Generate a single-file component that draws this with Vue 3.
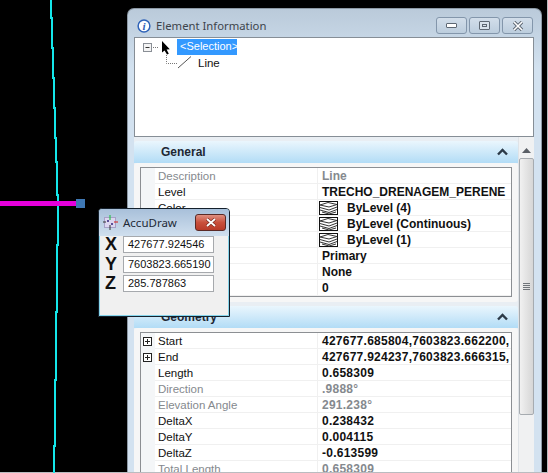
<script setup>
const generalRows = [
  { id: 'desc', label: 'Description', value: 'Line', muted: true },
  { id: 'level', label: 'Level', value: 'TRECHO_DRENAGEM_PERENE' },
  { id: 'color', label: 'Color', value: 'ByLevel (4)', stack: true },
  { id: 'style', label: '', value: 'ByLevel (Continuous)', stack: true },
  { id: 'weight', label: '', value: 'ByLevel (1)', stack: true },
  { id: 'class', label: '', value: 'Primary' },
  { id: 'template', label: '', value: 'None' },
  { id: 'priority', label: '', value: '0' },
]

const geometryRows = [
  { id: 'start', label: 'Start', value: '427677.685804,7603823.662200,', expand: true },
  { id: 'end', label: 'End', value: '427677.924237,7603823.666315,', expand: true },
  { id: 'length', label: 'Length', value: '0.658309' },
  { id: 'dir', label: 'Direction', value: '.9888°', muted: true },
  { id: 'elev', label: 'Elevation Angle', value: '291.238°', muted: true },
  { id: 'dx', label: 'DeltaX', value: '0.238432' },
  { id: 'dy', label: 'DeltaY', value: '0.004115' },
  { id: 'dz', label: 'DeltaZ', value: '-0.613599' },
  { id: 'total', label: 'Total Length', value: '0.658309', muted: true },
]

const panels = [
  { title: 'General', rows: generalRows },
  { title: 'Geometry', rows: geometryRows, numeric: true },
]

const coords = [
  ['X', '427677.924546'],
  ['Y', '7603823.665190'],
  ['Z', '285.787863'],
]

const cyanPath = 'M51 0V18H52V48H53V78H54V108H55V138H56V162H57V195H58V245H57V312H56V380H55V446H54V473'
</script>

<template>
  <div class="desktop">
    <svg class="cad" width="548" height="473">
      <path :d="cyanPath" fill="none" stroke="#14e6ea" stroke-width="2" />
      <rect x="0" y="201" width="76" height="5" fill="#e600dc" />
      <rect x="76" y="199" width="9" height="9" fill="#3f78b4" />
    </svg>

    <section class="window">
      <header class="titlebar">
        <svg class="info" width="14" height="14" viewBox="0 0 15 15">
          <circle cx="7.5" cy="7.5" r="6.3" fill="#fff" stroke="#2f63b8" stroke-width="1.6" />
          <text x="7.5" y="11.6" text-anchor="middle" class="info-i">i</text>
        </svg>
        <span class="title">Element Information</span>
        <div class="caption">
          <button class="cap"><span class="min"></span></button>
          <button class="cap"><span class="max"></span></button>
          <button class="cap">
            <svg width="12" height="10" viewBox="0 0 12 10">
              <path d="M2 1L10 9M10 1L2 9" stroke="#5b6570" stroke-width="3.4" />
              <path d="M2 1L10 9M10 1L2 9" stroke="#fff" stroke-width="1.6" />
            </svg>
          </button>
        </div>
      </header>

      <div class="tree">
        <svg class="tree-art" width="60" height="40" viewBox="0 0 60 40">
          <rect x="9.5" y="5.5" width="8" height="8" fill="#f4f4f4" stroke="#8a8f96" />
          <path d="M11.5 9.5H15.5" stroke="#333" />
          <path d="M19 9.5H25M32.5 17V25.5H43" stroke="#777" stroke-dasharray="1 1" fill="none" />
          <path d="M28 3V14.5L30.6 12.4L33 16.6L34.8 15.8L32.6 11.6L35.8 11.2Z" fill="#000" />
          <path d="M44 30L57 18.5" stroke="#555" />
        </svg>
        <div class="selection">&lt;Selection&gt;</div>
        <div class="leaf">Line</div>
      </div>

      <div class="content">
        <div class="panels">
          <article v-for="panel in panels" :key="panel.title" class="panel" :class="{ numeric: panel.numeric }">
            <div class="panel-head">
              <h2>{{ panel.title }}</h2>
              <svg width="11" height="8" viewBox="0 0 11 8">
                <path d="M1 6.5L5.5 2L10 6.5" fill="none" stroke="#2c3a48" stroke-width="2.4" />
              </svg>
            </div>
            <div class="panel-body">
              <div class="props">
                <div v-for="row in panel.rows" :key="row.id" class="row" :class="{ muted: row.muted }">
                  <div class="gutter">
                    <svg v-if="row.expand" width="9" height="9" viewBox="0 0 9 9">
                      <rect x="0.5" y="0.5" width="8" height="8" fill="#fff" stroke="#222" />
                      <path d="M2 4.5H7M4.5 2V7" stroke="#222" />
                    </svg>
                  </div>
                  <div class="label">{{ row.label }}</div>
                  <div class="value">
                    <svg v-if="row.stack" class="stack" width="19" height="14" viewBox="0 0 19 14">
                      <rect x="0.5" y="0.5" width="18" height="13" fill="#fff" stroke="#111" />
                      <path d="M1 4L9 1.5L18 3.5L10 6ZM1 6.5L10 9L18 6M1 9L10 11.5L18 8.5M3 11L10 13L17 11" fill="none" stroke="#333" />
                    </svg>
                    <span>{{ row.value }}</span>
                  </div>
                </div>
              </div>
            </div>
          </article>
        </div>

        <div class="scrollbar">
          <svg class="arrow" width="9" height="5" viewBox="0 0 9 5"><path d="M4.5 0L9 5H0Z" fill="#5a5f66" /></svg>
          <div class="thumb">
            <span class="grip"></span>
          </div>
        </div>
      </div>
    </section>

    <section class="accudraw">
      <header class="ad-title">
        <svg width="15" height="15" viewBox="0 0 15 15">
          <rect x="1.5" y="2.5" width="11" height="10" fill="#dcd6f0" stroke="#a7a1c8" />
          <path d="M7 0V5" stroke="#2fbf4f" stroke-width="1.2" />
          <path d="M7 10V15M0 7H3" stroke="#333" />
          <path d="M11 7H15" stroke="#d23b3b" stroke-width="1.2" />
          <rect x="4" y="5" width="2" height="2" fill="#5b4f96" />
          <rect x="8" y="8" width="2" height="2" fill="#5b4f96" />
        </svg>
        <span class="ad-name">AccuDraw</span>
        <button class="ad-close">
          <svg width="12" height="9" viewBox="0 0 12 9">
            <path d="M2 1L10 8M10 1L2 8" stroke="#7a2a20" stroke-width="3.2" />
            <path d="M2 1L10 8M10 1L2 8" stroke="#fff" stroke-width="1.8" />
          </svg>
        </button>
      </header>
      <div class="ad-fields">
        <div v-for="[axis, val] in coords" :key="axis" class="ad-row">
          <span class="axis">{{ axis }}</span>
          <span class="field">{{ val }}</span>
        </div>
      </div>
    </section>
  </div>
</template>

<style scoped>
.desktop {
  position: relative;
  box-sizing: border-box;
  width: 548px;
  height: 473px;
  overflow: hidden;
  background: #000;
  font-family: "Liberation Sans", Arial, sans-serif;
  font-size: 11.5px;
  box-shadow: inset -1px -1px 0 #b9bcc0;
}

.cad {
  position: absolute;
  left: 0;
  top: 0;
}

.window {
  position: absolute;
  left: 127px;
  top: 8px;
  box-sizing: border-box;
  width: 415px;
  height: 464px;
  overflow: hidden;
  padding: 0 7px 0 6px;
  border: 1px solid #8d99a5;
  border-bottom: 0;
  border-radius: 7px 7px 0 0;
  background: linear-gradient(#bacada 0, #c6d6e5 30px, #d3e2f0 60px);
}

.titlebar {
  display: flex;
  align-items: center;
  box-sizing: border-box;
  height: 28px;
  padding-top: 5px;
}

.info {
  margin: 0 5px 0 3px;
}

.info-i {
  font-family: "Liberation Serif", serif;
  font-size: 12px;
  font-style: italic;
  font-weight: 700;
  fill: #2f63b8;
}

.title {
  font-family: "Noto Sans", sans-serif;
  font-size: 11.3px;
  color: #3d444c;
}

.caption {
  display: flex;
  gap: 2px;
  margin-left: auto;
  margin-right: 1px;
}

.cap {
  display: flex;
  align-items: center;
  justify-content: center;
  box-sizing: border-box;
  width: 31px;
  height: 17px;
  padding: 0;
  border: 1px solid #8396ab;
  border-radius: 3px;
  background: linear-gradient(#d2deea, #bccddd);
}

.min {
  display: block;
  width: 9px;
  height: 3px;
  border: 1px solid #5e6873;
  border-radius: 1px;
  background: #fff;
}

.max {
  display: block;
  box-sizing: border-box;
  width: 11px;
  height: 9px;
  padding: 2px;
  border: 1px solid #5e6873;
  border-radius: 1px;
  background: #d9e3ec;
  box-shadow: inset 0 0 0 2px #d9e3ec, inset 0 0 0 3px #5e6873;
}

.tree {
  position: relative;
  box-sizing: border-box;
  height: 100px;
  border: 1px solid #868e96;
  background: #fff;
}

.tree-art {
  position: absolute;
  left: -1px;
  top: 0;
}

.selection {
  position: absolute;
  left: 42px;
  top: 1px;
  box-sizing: border-box;
  width: 60px;
  height: 16px;
  padding-left: 3px;
  background: #3399ff;
  color: #fff;
  font-size: 11px;
  line-height: 15px;
  white-space: nowrap;
}

.leaf {
  position: absolute;
  left: 63px;
  top: 18px;
  line-height: 15px;
  color: #111;
}

.content {
  display: flex;
  background: #e9eef3;
}

.panels {
  flex: none;
  width: 384px;
  padding-top: 4px;
}

.panel {
  margin-bottom: 4px;
}

.panel-head {
  display: flex;
  align-items: center;
  justify-content: space-between;
  box-sizing: border-box;
  height: 22px;
  padding: 0 10px 0 27px;
  border-radius: 3px 3px 0 0;
  background: linear-gradient(#eaf6fd, #b2dcf6);
}

h2 {
  margin: 0;
  font-size: 12px;
  font-weight: 700;
  color: #1d2733;
}

.panel-body {
  padding: 4px 6px 5px;
  border-radius: 3px;
  background: #f6f6f6;
}

.props {
  border: 1px solid #8c8f93;
  background: #fff;
}

.row {
  display: flex;
  height: 16px;
  line-height: 16px;
  box-shadow: inset 0 -1px 0 #f0f0f0;
  color: #111;
}

.gutter {
  display: flex;
  align-items: center;
  flex: none;
  width: 14px;
  padding-left: 2px;
  box-sizing: border-box;
  background: #f4f6f8;
}

.label {
  flex: none;
  width: 163px;
  padding-left: 3px;
  box-sizing: border-box;
  border-right: 1px solid #f0f0f0;
  white-space: nowrap;
  overflow: hidden;
}

.value {
  display: flex;
  align-items: center;
  padding-left: 4px;
  font-size: 12px;
  font-weight: 700;
  white-space: nowrap;
}

.numeric .value {
  letter-spacing: 0.25px;
}

.stack {
  flex: none;
  margin: 0 9px 0 -3px;
}

.muted {
  color: #85898e;
}

.scrollbar {
  position: relative;
  flex: none;
  width: 16px;
  height: 340px;
  box-sizing: border-box;
  border-left: 1px solid #dfe3e7;
  background: #f0f1f2;
}

.arrow {
  position: absolute;
  left: 3px;
  top: 11px;
}

.thumb {
  position: absolute;
  left: 0;
  top: 21px;
  box-sizing: border-box;
  width: 15px;
  height: 257px;
  border: 1px solid #a6abb0;
  border-radius: 2px;
  background: linear-gradient(90deg, #f1f1f1, #d6d6d6);
}

.grip {
  position: absolute;
  left: 3px;
  top: 124px;
  width: 7px;
  height: 7px;
  background: repeating-linear-gradient(#70757a 0 1px, transparent 1px 2px);
}

.accudraw {
  position: absolute;
  left: 98px;
  top: 208px;
  box-sizing: border-box;
  width: 132px;
  height: 109px;
  border: 1px solid #14202c;
  border-radius: 4px 4px 0 0;
  background: #f0f0f0;
  box-shadow: inset 0 0 0 1px #86d4ea;
}

.ad-title {
  display: flex;
  align-items: center;
  height: 27px;
  padding: 0 3px 1px 4px;
  box-sizing: border-box;
  border-radius: 3px 3px 0 0;
  background: linear-gradient(#a8c0da, #d0dfee);
}

.ad-name {
  margin-left: 5px;
  font-family: "Noto Sans", sans-serif;
  font-size: 11.5px;
  color: #1e2a36;
}

.ad-close {
  display: flex;
  align-items: center;
  justify-content: center;
  box-sizing: border-box;
  width: 31px;
  height: 17px;
  margin-left: auto;
  padding: 0;
  border: 1px solid #5a2a26;
  border-radius: 3px;
  background: linear-gradient(#df8f80 0, #c9503c 50%, #b83a28 100%);
}

.ad-fields {
  display: flex;
  flex-direction: column;
  gap: 2.5px;
  padding-left: 6px;
}

.ad-row {
  display: flex;
  align-items: center;
  height: 17px;
}

.axis {
  width: 18px;
  font-size: 18px;
  font-weight: 700;
  color: #111;
}

.field {
  box-sizing: border-box;
  width: 91px;
  height: 17px;
  padding-left: 4px;
  border: 1px solid #a6a9ad;
  background: #fff;
  font-size: 11px;
  line-height: 15px;
  color: #111;
  white-space: nowrap;
  overflow: hidden;
}
</style>
